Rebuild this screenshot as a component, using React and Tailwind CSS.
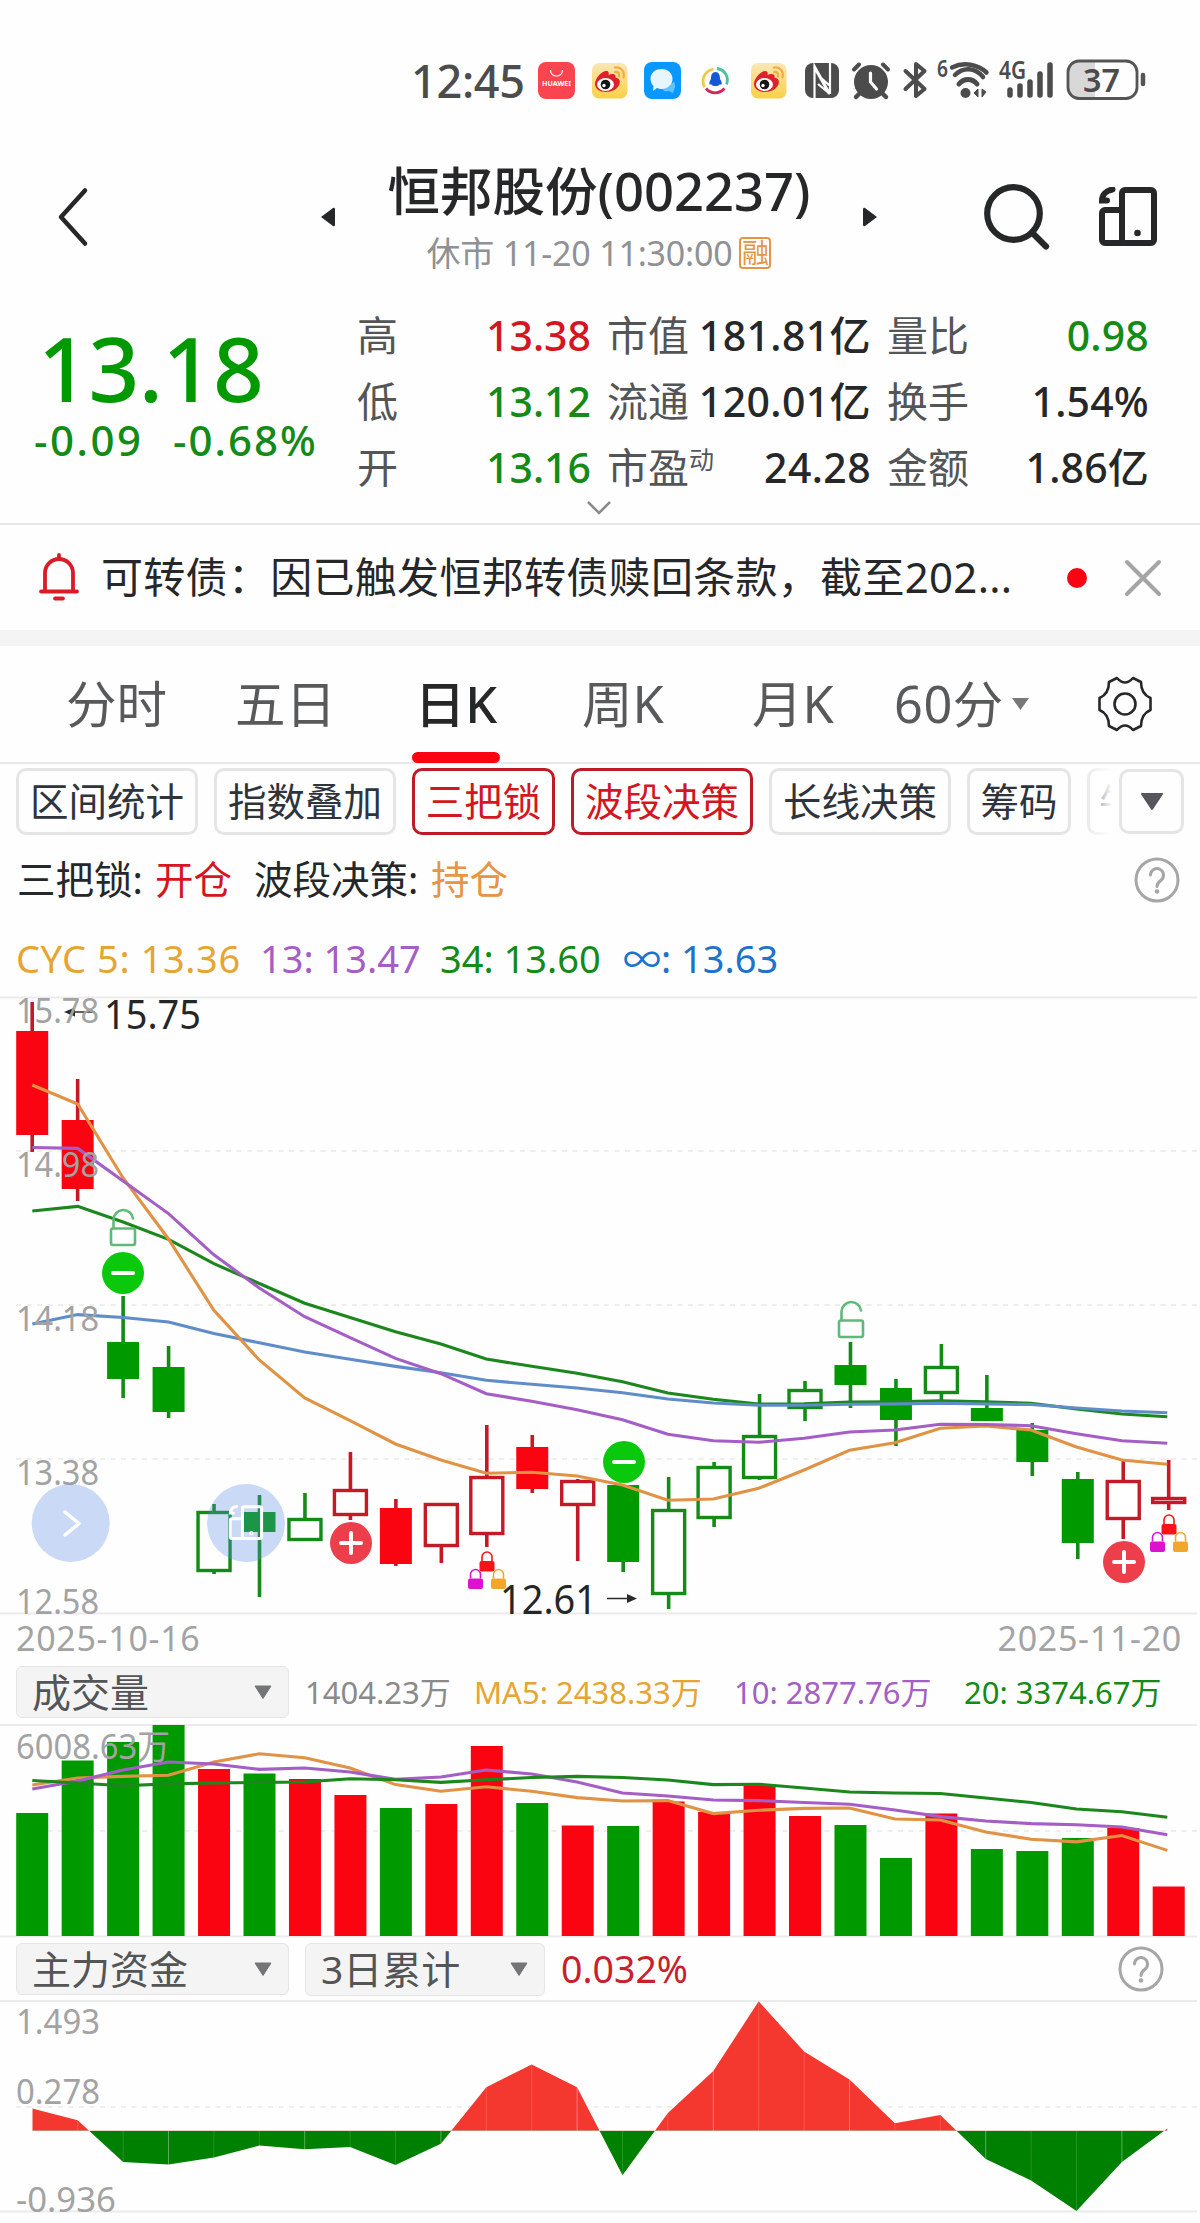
import React from 'react';

const RED = '#fb0411';
const GREEN = '#009900';
const RED_LINE = '#c41a27';
const GREEN_LINE = '#148a17';

// [type, high, bodyTop, bodyBottom, low, filled]
const candles = [
  ['r', 1002, 1031, 1135, 1152, 1],
  ['r', 1079, 1120, 1189, 1201, 1],
  ['g', 1296, 1342, 1379, 1398, 1],
  ['g', 1346, 1367, 1412, 1418, 1],
  ['g', 1504, 1511, 1572, 1574, 0],
  ['g', 1495, 1512, 1532, 1597, 1],
  ['g', 1493, 1518, 1541, 1541, 0],
  ['r', 1452, 1489, 1516, 1520, 0],
  ['r', 1499, 1508, 1564, 1566, 1],
  ['r', 1503, 1503, 1547, 1563, 0],
  ['r', 1425, 1476, 1535, 1547, 0],
  ['r', 1435, 1447, 1489, 1493, 1],
  ['r', 1479, 1480, 1506, 1561, 0],
  ['g', 1485, 1485, 1562, 1572, 1],
  ['g', 1477, 1509, 1595, 1609, 0],
  ['g', 1462, 1466, 1519, 1527, 0],
  ['g', 1394, 1435, 1479, 1480, 0],
  ['g', 1381, 1389, 1409, 1421, 0],
  ['g', 1342, 1365, 1385, 1408, 1],
  ['g', 1379, 1388, 1420, 1446, 1],
  ['g', 1344, 1366, 1394, 1401, 0],
  ['g', 1375, 1408, 1421, 1421, 1],
  ['g', 1423, 1430, 1462, 1476, 1],
  ['g', 1472, 1479, 1543, 1559, 1],
  ['r', 1460, 1480, 1520, 1539, 0],
  ['r', 1460, 1497, 1504, 1510, 0],
];

const cyc = [
  ['#1b871c', [1211, 1206.4, 1222, 1239.3, 1263.7, 1283.5, 1303.2, 1317.5, 1331.8, 1344, 1359, 1366.3, 1373.3, 1381.7, 1393, 1399.3, 1404, 1403.7, 1402, 1401.7, 1400.7, 1401.7, 1403.3, 1409, 1414, 1416.7]],
  ['#5f8dc9', [1323.9, 1314.6, 1317.5, 1322, 1333.5, 1342.8, 1352, 1359.2, 1366.4, 1372.7, 1380.3, 1384.3, 1388, 1392.7, 1399, 1403, 1405.3, 1405.3, 1404.3, 1404, 1403.3, 1404, 1404.5, 1408, 1411, 1412.7]],
  ['#e09344', [1085, 1104, 1178, 1239, 1310.4, 1360, 1398, 1420.7, 1444, 1460, 1473.3, 1472.3, 1476, 1485, 1500.3, 1499, 1488.3, 1470, 1450.3, 1442.7, 1428.3, 1426, 1430, 1447, 1460, 1464.3]],
  ['#a45ec6', [1147.5, 1148.4, 1181, 1213.6, 1254.8, 1288, 1316.7, 1337.7, 1358.4, 1373.7, 1393.7, 1401.3, 1409.7, 1419.7, 1434.3, 1440.7, 1442.3, 1438.3, 1432, 1430, 1424.3, 1424.5, 1425.7, 1433.7, 1440.7, 1443.3]],
];

const volumes = [
  ['g', 1813], ['g', 1760.5], ['g', 1742], ['g', 1725], ['r', 1769], ['g', 1773.5], ['r', 1779], ['r', 1795], ['g', 1808],
  ['r', 1804], ['r', 1746], ['g', 1803], ['r', 1825.5], ['g', 1826], ['r', 1801.5], ['r', 1812], ['r', 1785], ['r', 1816],
  ['g', 1825], ['g', 1858], ['r', 1813.5], ['g', 1849], ['g', 1851], ['g', 1838], ['r', 1828], ['r', 1886.5],
];

const volumeMa = [
  ['#e09344', [1785, 1778, 1776.4, 1775.3, 1762, 1753.8, 1757.8, 1768, 1784.6, 1791.3, 1786.8, 1791.3, 1797.6, 1801, 1800.6, 1813.6, 1810.3, 1808.4, 1808, 1819, 1820, 1832, 1839.3, 1841.9, 1835.5, 1850.4]],
  ['#a45ec6', [1789, 1781, 1770, 1762, 1764, 1769.4, 1768, 1772, 1779.4, 1777, 1770, 1774, 1782, 1793, 1796, 1800, 1800.6, 1802.5, 1804.3, 1810, 1816.6, 1821, 1823.6, 1824.8, 1827, 1834.8]],
  ['#1b871c', [1780.5, 1783, 1785.7, 1783.9, 1783, 1782.4, 1782, 1778.7, 1779.8, 1782.4, 1779.8, 1777.5, 1776.4, 1777.5, 1780, 1784.6, 1784.2, 1788, 1792, 1793, 1793.5, 1798, 1802.5, 1809, 1811.7, 1817.3]],
];

const ZERO = 2130.7;
const funds = [2108.4, 2120.3, 2162, 2164.5, 2157.5, 2145.6, 2149.3, 2147, 2165, 2143.7, 2087.2, 2064.5, 2087.2, 2175.3, 2113, 2071, 2001.3, 2051.5, 2079.4, 2123.3, 2115, 2159, 2180.5, 2211, 2162, 2128.5];

const barX = i => 32.2 + i * 45.46;
const lineX = i => 32.3 + i * 45.4;
const points = values => values.map((y, i) => `${lineX(i)},${y}`).join(' ');

function Lines({ series }) {
  return series.map(([color, values]) => (
    <polyline key={color} points={points(values)} fill="none" stroke={color} strokeWidth="3.1" />
  ));
}

function Grid({ y, dashed }) {
  return <line x1={dashed ? 16 : 0} x2="1197" y1={y} y2={y} stroke={dashed ? '#eeeeee' : '#ebebeb'} strokeWidth="2" strokeDasharray={dashed ? '5 5.5' : undefined} />;
}

function Label({ x, y, w, size = 34, color = '#a3a3a3', children }) {
  return <text x={x} y={y} textLength={w} lengthAdjust="spacingAndGlyphs" fontSize={size} fill={color}>{children}</text>;
}

function Minus({ x, y }) {
  return (
    <g>
      <circle cx={x} cy={y} r="21" fill="#0ac80c" />
      <path d={`M${x - 10} ${y}h20`} stroke="#fff" strokeWidth="4" strokeLinecap="round" />
    </g>
  );
}

function Plus({ x, y }) {
  return (
    <g>
      <circle cx={x} cy={y} r="21" fill="#ed3e4c" />
      <path d={`M${x - 10} ${y}h20M${x} ${y - 10}v20`} stroke="#fff" strokeWidth="4" strokeLinecap="round" />
    </g>
  );
}

function Unlock({ x, y }) {
  return (
    <g transform={`translate(${x} ${y})`} fill="none" stroke="#5fba79" strokeWidth="2.6">
      <rect x="-12" y="19.5" width="24" height="16.5" rx="2" />
      <path d="M-9.5 19V10.5A9.8 9.8 0 0 1 10 9.5" strokeLinecap="round" />
    </g>
  );
}

function Lock({ x, y, color }) {
  return (
    <g transform={`translate(${x} ${y})`}>
      <path d="M-5 10V6a5 5 0 0 1 10 0v4" fill="none" stroke={color} strokeWidth="1.6" />
      <rect x="-7.5" y="10" width="15" height="10.5" rx="2" fill={color} />
    </g>
  );
}

function Locks({ x, y }) {
  return (
    <g>
      <Lock x={x} y={y} color="#fa1218" />
      <Lock x={x - 11.5} y={y + 17.5} color="#dc12cf" />
      <Lock x={x + 11.5} y={y + 17.5} color="#f3a62a" />
    </g>
  );
}

function DevicePath() {
  return (
    <>
      <rect x="24" y="3" width="32" height="53" rx="3" />
      <path d="M23 23H7a3 3 0 0 0-3 3v27a3 3 0 0 0 3 3h18" />
      <path d="M14.500 2.500C8 3.500 4 8 4 13.500H9" />
    </>
  );
}

function CandleChart() {
  return (
    <svg className="block overflow-visible" width="1200" height="620" viewBox="0 996 1200 620">
      <Grid y={997.5} />
      <Grid y={1151} dashed />
      <Grid y={1305} dashed />
      <Grid y={1459} dashed />
      <Grid y={1613.5} />
      {candles.map(([type, high, top, bottom, low, filled], i) => {
        const x = barX(i);
        const line = type === 'r' ? RED_LINE : GREEN_LINE;
        return (
          <g key={i}>
            <path d={`M${x} ${high}V${top}M${x} ${bottom}V${low}`} stroke={line} strokeWidth="3.6" />
            {filled
              ? <rect x={x - 16} y={top} width="32" height={bottom - top} fill={type === 'r' ? RED : GREEN} />
              : <rect x={x - 16} y={top + 1.5} width="32" height={bottom - top - 3} fill="#fff" stroke={line} strokeWidth="3.4" />}
          </g>
        );
      })}
      <Lines series={cyc} />
      <Unlock x={123} y={1209} />
      <Minus x={123} y={1273} />
      <Minus x={624} y={1462} />
      <Unlock x={851} y={1301} />
      <Plus x={351} y={1543} />
      <Plus x={1124} y={1562} />
      <Locks x={487} y={1551} />
      <Locks x={1169} y={1514} />
      <path d="M72 1012H95" stroke="#2b2b2b" strokeWidth="1.5" />
      <path d="M64 1012l11-4.500v9z" fill="#2b2b2b" />
      <path d="M607 1598.500H630" stroke="#2b2b2b" strokeWidth="1.500" />
      <path d="M637 1598.500l-10-4.500v9z" fill="#2b2b2b" />
      <Label x={16} y={1023} w={83}>15.78</Label>
      <Label x={16} y={1177} w={83}>14.98</Label>
      <Label x={16} y={1331} w={83}>14.18</Label>
      <Label x={16} y={1485} w={83}>13.38</Label>
      <Label x={16} y={1614} w={83}>12.58</Label>
      <Label x={104} y={1029} w={97} size={40} color="#262626">15.75</Label>
      <Label x={500} y={1614} w={97} size={40} color="#262626">12.61</Label>
      {/* floating buttons */}
      <circle cx="70.700" cy="1523" r="39" fill="rgba(89,141,229,0.314)" />
      <path d="M65 1512l14 11.500-14 11.500" fill="none" stroke="#fff" strokeWidth="3.500" strokeLinecap="round" strokeLinejoin="round" />
      <circle cx="246" cy="1523" r="39" fill="rgba(89,141,229,0.314)" />
      <g transform="translate(228 1505) scale(0.6)" fill="none" stroke="#fff" strokeWidth="5" strokeLinecap="round">
        <DevicePath />
        <circle cx="39" cy="47" r="1" />
      </g>
    </svg>
  );
}

function VolumeChart() {
  return (
    <svg className="block" width="1200" height="214" viewBox="0 1724 1200 214">
      <Grid y={1725} />
      <Grid y={1831} dashed />
      <Grid y={1936.5} />
      {volumes.map(([type, top], i) => (
        <rect key={i} x={barX(i) - 16} y={top} width="32" height={1936 - top} fill={type === 'r' ? RED : GREEN} />
      ))}
      <Lines series={volumeMa} />
      <Label x={16} y={1758.5} w={154}>6008.63万</Label>
    </svg>
  );
}

function FundChart() {
  const area = `${lineX(0)},${ZERO} ${points(funds)} ${lineX(25)},${ZERO}`;
  return (
    <svg className="block" width="1200" height="223" viewBox="0 2000 1200 223">
      <defs>
        <clipPath id="above"><rect x="0" y="2000" width="1200" height={ZERO - 2000} /></clipPath>
        <clipPath id="below"><rect x="0" y={ZERO} width="1200" height="90" /></clipPath>
      </defs>
      <Grid y={2001} />
      <Grid y={2107} dashed />
      <Grid y={2211.500} />
      <polygon points={area} fill="#f43830" clipPath="url(#above)" />
      <polygon points={area} fill="#008000" clipPath="url(#below)" />
      {funds.map((y, i) => (
        <line key={i} x1={lineX(i)} x2={lineX(i)} y1={y} y2={ZERO} stroke="#fff" strokeOpacity={i % 3 ? 0.15 : 0.35} strokeWidth="1" />
      ))}
      <Label x={16} y={2034} w={84}>1.493</Label>
      <Label x={16} y={2104} w={84}>0.278</Label>
      <Label x={16} y={2212} w={100}>-0.936</Label>
    </svg>
  );
}

function Weibo() {
  return (
    <svg className="h-[37px] w-[37px]" viewBox="0 0 37 37">
      <defs>
        <linearGradient id="weibo" x1="0" y1="0" x2="0" y2="1"><stop stopColor="#f9e8b6" /><stop offset="1" stopColor="#fcd045" /></linearGradient>
      </defs>
      <rect x="1" y="1" width="35.500" height="35.500" rx="7" fill="url(#weibo)" />
      <path d="M4 22C4 16 11 9 15 9c3 0 3 2 2.500 4 3-1.500 8-1.500 7 2.500 4 1 5 3 4 6.500C27 27 21 30 15 30S4 27 4 22Z" fill="#e0202a" />
      <ellipse cx="14.500" cy="22.500" rx="8.500" ry="6.500" fill="#fff" />
      <circle cx="14.500" cy="22.500" r="4.800" fill="#161616" />
      <circle cx="13" cy="23.500" r="1.700" fill="#fff" />
      <path d="M24 5.500c6-1 10 4 8.500 10M24 10c3-.500 5 1.500 4 4.500" fill="none" stroke="#f2ab3c" strokeWidth="2.200" strokeLinecap="round" />
    </svg>
  );
}

function StatusBar() {
  return (
    <div className="flex h-[162px] items-start pt-[62px] pl-[411px] text-[#4c4c4c]">
      <div className="w-[127px] text-[45px] leading-[37px] font-medium tracking-[-0.3px]">12:45</div>
      <div className="flex w-[266px] shrink-0 gap-[16px]">
        <svg className="h-[37px] w-[37px]" viewBox="0 0 37 37">
          <rect width="37" height="37" rx="8" fill="#fa4450" />
          <path d="M12.500 8c0 8 12 8 12 0" fill="none" stroke="#fff" strokeWidth="1.200" />
          <text x="4" y="23.500" fontSize="6.500" fontWeight="700" fill="#fff" textLength="29" lengthAdjust="spacingAndGlyphs">HUAWEI</text>
        </svg>
        <Weibo />
        <svg className="h-[37px] w-[37px]" viewBox="0 0 37 37">
          <rect width="37" height="37" rx="8" fill="#0a97ff" />
          <path d="M30 20c2 3 1 6 0 7.500l-1 3.500-4-2c-4 1-6 0-7-3z" fill="#5fc3ff" />
          <path d="M17.500 7c7 0 11 4.500 11 10S23.500 27 17.500 27c-2 0-3-.500-4.500-1l-4 3 .500-5C7.500 22 6.500 19.500 6.500 17c0-5.500 4-10 11-10Z" fill="#e6f5ff" />
        </svg>
        <svg className="h-[37px] w-[37px]" viewBox="0 0 37 37">
          <g fill="none" strokeWidth="2.800">
            <path d="M16.500 7C7 9 4 18 7.500 25" stroke="#f2cb3d" />
            <path d="M20 6.500C29 8 32 16 29.500 22.500" stroke="#4cc29f" />
            <path d="M9 26.500c5 6 13.500 5.500 18.500 0" stroke="#d6245d" />
          </g>
          <path d="M18.500 10c4 0 4.500 4 4.500 7 1.500 2 2 4 1.500 5.500h-2c-1 2-7 2-8 0h-2c-.500-1.500 0-3.500 1.500-5.500 0-3 .500-7 4.500-7Z" fill="#1558d6" />
        </svg>
        <Weibo />
      </div>
      <svg className="-mt-[4px] h-[44px] w-[354px] shrink-0" viewBox="-4 0 354 44" fill="none">
        <rect x="-3" y="5" width="34" height="35" rx="8" fill="#4c4c4c" />
        <path d="M6.500 40V8L22 36M6 9l15 27M22 5v31M10 17l12 11M10 26l12 10" stroke="#fff" strokeWidth="2.200" />
        <circle cx="63" cy="24" r="17" fill="#4c4c4c" />
        <path d="M62.500 15v9l6 7" stroke="#fff" strokeWidth="3.200" strokeLinecap="round" />
        <path d="M46 11.500l5-5M80 11.500l-5-5" stroke="#4c4c4c" strokeWidth="4" strokeLinecap="round" />
        <path d="M51 36l-3 3M75 36l3 3" stroke="#4c4c4c" strokeWidth="4.500" strokeLinecap="round" />
        <path d="M97.500 13l19 18-8.500 7V6l8.500 7-19 18" stroke="#4c4c4c" strokeWidth="4" strokeLinejoin="round" strokeLinecap="round" />
        <text x="129" y="19" fontSize="23" fontWeight="600" fill="#4c4c4c" textLength="11" lengthAdjust="spacingAndGlyphs">6</text>
        <g stroke="#4c4c4c" strokeWidth="4.500" strokeLinecap="round">
          <path d="M144 9.500c12-6 26-3 34.500 5" />
          <path d="M147 17c8-8 20-8 28 2" />
          <path d="M151 26c5-6 13-6 18 0" strokeWidth="5" />
        </g>
        <circle cx="157.500" cy="35" r="5" fill="#4c4c4c" />
        <path d="M170 39v-8l-4 4zM174 31v8l4-5z" fill="#4c4c4c" stroke="#4c4c4c" strokeWidth="1" />
        <text x="191" y="21" fontSize="25" fontWeight="600" fill="#4c4c4c" textLength="27" lengthAdjust="spacingAndGlyphs">4G</text>
        <path d="M202 32v5M212 28v9M222 24v13M232 16v21M242 7v30" stroke="#4c4c4c" strokeWidth="5.500" strokeLinecap="round" />
        <path d="M270 4h17v36h-17a10 10 0 0 1-10-10V14a10 10 0 0 1 10-10Z" fill="#d8d8d8" />
        <rect x="260" y="3" width="69" height="37.500" rx="11" stroke="#555" strokeWidth="2.800" />
        <path d="M335 17v9" stroke="#555" strokeWidth="4.500" strokeLinecap="round" />
        <text x="275" y="34" fontSize="33" fontWeight="600" fill="#4c4c4c" textLength="37" lengthAdjust="spacingAndGlyphs">37</text>
      </svg>
    </div>
  );
}

function Header() {
  return (
    <header className="flex h-[116px] text-[#262728]">
      <svg className="mt-[24px] ml-[51px] h-[64px] w-[40px]" viewBox="0 0 40 64" fill="none" stroke="currentColor" strokeWidth="4.500" strokeLinecap="round" strokeLinejoin="round">
        <path d="M34 4.500L10 31 34 57.500" />
      </svg>
      <svg className="mt-[45px] ml-[229px] h-[20px] w-[16px]" viewBox="0 0 16 20"><path d="M1 10L13 1a1.500 1.500 0 0 1 2 1v16a1.500 1.500 0 0 1-2 1z" fill="currentColor" /></svg>
      <div className="flex w-[526px] flex-col items-center">
        <div className="-mt-[1px] text-[52.500px] leading-[60px] font-medium whitespace-nowrap">恒邦股份(002237)</div>
        <div className="mt-[12px] flex items-center gap-[7px] whitespace-nowrap text-[#8f9194]">
          <span className="text-[34px] leading-[40px] tracking-[-0.2px]">休市 11-20 11:30:00</span>
          <span className="flex h-[32px] w-[32px] items-center justify-center rounded-[4px] border-2 border-[#e59544] text-[27px] leading-[28px] text-[#e59544]">融</span>
        </div>
      </div>
      <svg className="mt-[45px] h-[20px] w-[16px]" viewBox="0 0 16 20"><path d="M15 10L3 1a1.500 1.500 0 0 0-2 1v16a1.500 1.500 0 0 0 2 1z" fill="currentColor" /></svg>
      <svg className="mt-[20px] ml-[102px] h-[70px] w-[70px]" viewBox="0 0 70 70" fill="none" stroke="currentColor" strokeWidth="6.200" strokeLinecap="round">
        <circle cx="33.500" cy="31.500" r="26.300" />
        <path d="M53 51.500l13 13" />
      </svg>
      <svg className="mt-[25px] ml-[48px] h-[60px] w-[62px]" viewBox="0 0 62 60" fill="none" stroke="currentColor" strokeWidth="6" strokeLinecap="round">
        <DevicePath />
        <circle cx="39.500" cy="46" r="3.300" fill="currentColor" stroke="none" />
      </svg>
    </header>
  );
}

const stats = [
  ['高', '13.38', 'text-[#d31622]', '市值', '181.81亿', '量比', '0.98', 'text-[#148a17]'],
  ['低', '13.12', 'text-[#148a17]', '流通', '120.01亿', '换手', '1.54%', 'text-[#262728]'],
  ['开', '13.16', 'text-[#148a17]', '市盈', '24.28', '金额', '1.86亿', 'text-[#262728]'],
];

function Quote() {
  return (
    <section className="relative flex h-[247px] border-b-2 border-[#e8e8e8]">
      <div className="w-[357px] pt-[42px] pl-[34px] font-medium text-[#009900]">
        <div className="pl-[4px] text-[89px] leading-[96px] tracking-[-0.5px]">13.18</div>
        <div className="mt-[4px] flex gap-[29px] text-[42px] leading-[40px] text-[#148a17]">
          <span className="w-[110px] tracking-[2.500px]">-0.09</span>
          <span className="tracking-[2px]">-0.68%</span>
        </div>
      </div>
      <div className="pt-[24px]">
        {stats.map(([a, av, ac, b, bv, c, cv, cc]) => (
          <div key={a} className="flex h-[66px] items-center text-[41px] leading-[50px] whitespace-nowrap text-[#545557]">
            <span className="w-[100px]">{a}</span>
            <span className={`w-[134px] text-right font-medium ${ac}`}>{av}</span>
            <span className="ml-[16px] w-[110px]">
              {b}{b === '市盈' && <sup className="-top-[14px] text-[25px]">动</sup>}
            </span>
            <span className="w-[154px] text-right font-medium tracking-[0.4px] text-[#262728]"><span className="-ml-[40px]">{bv}</span></span>
            <span className="ml-[16px] w-[100px]">{c}</span>
            <span className={`w-[162px] text-right font-medium tracking-[0.2px] ${cc}`}>{cv}</span>
          </div>
        ))}
      </div>
      <svg className="absolute top-[223px] left-[587px] h-[14px] w-[24px]" viewBox="0 0 24 14" fill="none" stroke="#8a8a8a" strokeWidth="2.500"><path d="M1 1l11 11L23 1" /></svg>
    </section>
  );
}

function Notice() {
  return (
    <div className="flex h-[121px] items-center border-b-[16px] border-[#f4f4f4] text-[#262728]">
      <svg className="ml-[38px] h-[50px] w-[42px]" viewBox="0 0 42 50" fill="none" stroke="#d91c28" strokeWidth="3.800" strokeLinecap="round" strokeLinejoin="round">
        <path d="M7 38V20a14 14 0 0 1 28 0v18M3 38.500h36M21 5V2M17 45.500h8" />
      </svg>
      <div className="-mt-[2px] ml-[21px] w-[966px] text-[42px] whitespace-nowrap tracking-[0.3px]">
        可转债：因已触发恒邦转债赎回条款，截至202...
      </div>
      <span className="h-[20px] w-[20px] rounded-full bg-[#fb0411]"></span>
      <svg className="ml-[37px] h-[38px] w-[38px]" viewBox="0 0 38 38" stroke="#a5a5a5" strokeWidth="4" strokeLinecap="round"><path d="M3 3l32 32M35 3L3 35" /></svg>
    </div>
  );
}

function Tabs() {
  return (
    <nav className="flex h-[118px] items-center border-b-2 border-[#e8e8e8] text-[50.500px] whitespace-nowrap text-[#58595b]">
      <span className="ml-[66px] w-[169px]">分时</span>
      <span className="w-[177px]">五日</span>
      <span className="relative flex h-full w-[88px] items-center justify-center font-medium text-[#262728]">
        日K
        <span className="absolute bottom-[-1px] left-0 h-[11px] w-[88px] rounded-full bg-[#fb0411]"></span>
      </span>
      <span className="ml-[82px] w-[170px]">周K</span>
      <span className="w-[142px]">月K</span>
      <span className="w-[118px] tracking-[0.5px]">60分</span>
      <svg className="h-[12px] w-[17px]" viewBox="0 0 17 12"><path d="M0 0h17L8.500 12z" fill="#77787a" /></svg>
      <svg className="ml-[68px] h-[56px] w-[56px]" viewBox="0 0 56 56" fill="none" stroke="#262728" strokeWidth="2.600" strokeLinejoin="round">
        <path d="M20 2Q28 11 36 2L44 6Q44 18 53.500 22V34Q44 38 44 50L36 54Q28 45 20 54L12 50Q12 38 2.500 34V22Q12 18 12 6Z" />
        <circle cx="28" cy="28" r="10.500" />
      </svg>
    </nav>
  );
}

const chips = [
  ['区间统计', 'w-[182px]', false],
  ['指数叠加', 'w-[182px]', false],
  ['三把锁', 'w-[143px]', true],
  ['波段决策', 'w-[182px]', true],
  ['长线决策', 'w-[182px]', false],
  ['筹码', 'w-[104px]', false],
];

function Chips() {
  return (
    <div className="flex h-[72px] pt-[4px] pl-[16px]">
      <div className="relative flex w-[1096px] shrink-0 gap-[16px] overflow-hidden">
        {chips.map(([label, width, on]) => (
          <span key={label} className={`flex h-[67px] shrink-0 items-center justify-center rounded-[10px] border-3 text-[38.500px] whitespace-nowrap ${width} ${on ? 'border-[#bd1b28] text-[#d31622]' : 'border-[#e5e5e5] text-[#2f343c]'}`}>{label}</span>
        ))}
        <span className="flex h-[67px] w-[104px] shrink-0 items-center rounded-[10px] border-3 border-[#e5e5e5] pl-[9px] text-[38.500px] text-[#2f343c]">牛</span>
        <span className="absolute top-0 right-0 h-full w-[26px] bg-gradient-to-r from-white/20 to-white"></span>
      </div>
      <span className="mt-[1px] ml-[7px] flex h-[65px] w-[65px] items-center justify-center rounded-[10px] border-3 border-[#e5e5e5]">
        <svg width="24" height="18" viewBox="0 0 24 18"><path d="M2 1h20L12 16z" fill="#55565e" stroke="#55565e" strokeWidth="2" strokeLinejoin="round" /></svg>
      </span>
    </div>
  );
}

function Help({ className }) {
  return (
    <svg className={className} viewBox="0 0 46 46" fill="none" stroke="#a6a6a6" strokeWidth="3">
      <circle cx="23" cy="23" r="21" />
      <path d="M16.500 18a6.500 6.500 0 1 1 10.500 5.200c-2.500 2-4 3-4 6.300" strokeLinecap="round" />
      <circle cx="23" cy="34.500" r="2.300" fill="#a6a6a6" stroke="none" />
    </svg>
  );
}

function Signals() {
  return (
    <div className="flex h-[84px] items-center pt-[4px] text-[38.500px] whitespace-nowrap text-[#262728]">
      <span className="ml-[17px] w-[138px]">三把锁:</span>
      <span className="w-[99px] text-[#d31622]">开仓</span>
      <span className="w-[177px]">波段决策:</span>
      <span className="text-[#e59544]">持仓</span>
      <Help className="mr-[20px] ml-auto h-[46px] w-[46px]" />
    </div>
  );
}

function CycRow() {
  return (
    <div className="flex h-[76px] items-center text-[38px] whitespace-nowrap">
      <span className="ml-[16px] w-[244px] tracking-[0.600px] text-[#e6a532]">CYC 5: 13.36</span>
      <span className="w-[180px] text-[#a45ec6]">13: 13.47</span>
      <span className="w-[183px] text-[#148a17]">34: 13.60</span>
      <span className="text-[#1d72cc]">∞: 13.63</span>
    </div>
  );
}

function Select({ label, className }) {
  return (
    <div className={`flex shrink-0 items-center justify-between rounded-[6px] border border-[#e5e5e5] bg-[#f4f4f4] pr-[16px] pl-[15px] text-[39px] leading-[46px] text-[#545557] ${className}`}>
      {label}
      <svg width="18" height="15" viewBox="0 0 18 15"><path d="M1 1h16L9 13.500z" fill="#737477" stroke="#737477" strokeLinejoin="round" /></svg>
    </div>
  );
}

export default function App() {
  return (
    <div className="h-[2223px] w-[1200px] overflow-hidden bg-[#fefefe] font-['Noto_Sans','Noto_Sans_CJK_SC',sans-serif]">
      <StatusBar />
      <Header />
      <Quote />
      <Notice />
      <Tabs />
      <Chips />
      <Signals />
      <CycRow />
      <CandleChart />
      <div className="flex h-[46px] items-center justify-between pr-[18px] pb-[3px] pl-[16px] text-[34px] leading-[36px] tracking-[0.700px] text-[#a3a3a3]">
        <span>2025-10-16</span>
        <span>2025-11-20</span>
      </div>
      <div className="flex h-[62px] items-center pb-[2px] text-[31px] whitespace-nowrap">
        <Select label="成交量" className="ml-[16px] h-[52px] w-[273px]" />
        <span className="ml-[16px] w-[169px] text-[#8a8a8a]">1404.23万</span>
        <span className="w-[260px] text-[#e6a532]">MA5: 2438.33万</span>
        <span className="w-[230px] text-[#a45ec6]">10: 2877.76万</span>
        <span className="text-[#148a17]">20: 3374.67万</span>
      </div>
      <VolumeChart />
      <div className="flex h-[62px] items-center text-[37.500px]">
        <Select label="主力资金" className="ml-[16px] h-[52px] w-[273px]" />
        <Select label="3日累计" className="ml-[16px] h-[53px] w-[240px]" />
        <span className="ml-[16px] text-[#c9202c]">0.032%</span>
        <Help className="mr-[36px] ml-auto h-[46px] w-[46px]" />
      </div>
      <FundChart />
    </div>
  );
}
